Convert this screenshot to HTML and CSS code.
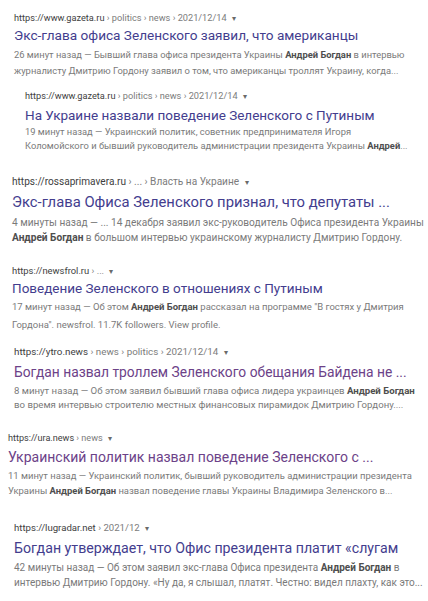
FILE: index.html
```html
<!DOCTYPE html>
<html lang="ru">
<head>
<meta charset="utf-8">
<title>Результаты поиска</title>
<link rel="stylesheet" href="styles.css">
</head>
<body>
<main class="results">
  <section class="res r1">
    <div class="url"><span class="dom">https://www.gazeta.ru</span> › politics › news › 2021/12/14 <span class="arr">▾</span></div>
    <div class="title">Экс-глава офиса Зеленского заявил, что американцы</div>
    <div class="snip">
      <div class="line">26 минут назад — Бывший глава офиса президента Украины <b>Андрей Богдан</b> в интервью</div>
      <div class="line">журналисту Дмитрию Гордону заявил о том, что американцы троллят Украину, когда...</div>
    </div>
  </section>
  <section class="res r2">
    <div class="url"><span class="dom">https://www.gazeta.ru</span> › politics › news › 2021/12/14 <span class="arr">▾</span></div>
    <div class="title">На Украине назвали поведение Зеленского с Путиным</div>
    <div class="snip">
      <div class="line">19 минут назад — Украинский политик, советник предпринимателя Игоря</div>
      <div class="line">Коломойского и бывший руководитель администрации президента Украины <b>Андрей</b>...</div>
    </div>
  </section>
  <section class="res r3">
    <div class="url"><span class="dom">https://rossaprimavera.ru</span> › ... › Власть на Украине <span class="arr">▾</span></div>
    <div class="title">Экс-глава Офиса Зеленского признал, что депутаты ...</div>
    <div class="snip">
      <div class="line">4 минуты назад — ... 14 декабря заявил экс-руководитель Офиса президента Украины</div>
      <div class="line"><b>Андрей Богдан</b> в большом интервью украинскому журналисту Дмитрию Гордону.</div>
    </div>
  </section>
  <section class="res r4">
    <div class="url"><span class="dom">https://newsfrol.ru</span> › ... <span class="arr">▾</span></div>
    <div class="title">Поведение Зеленского в отношениях с Путиным</div>
    <div class="snip">
      <div class="line">17 минут назад — Об этом <b>Андрей Богдан</b> рассказал на программе "В гостях у Дмитрия</div>
      <div class="line">Гордона". newsfrol. 11.7K followers. View profile.</div>
    </div>
  </section>
  <section class="res r5">
    <div class="url"><span class="dom">https://ytro.news</span> › news › politics › 2021/12/14 <span class="arr">▾</span></div>
    <div class="title visited">Богдан назвал троллем Зеленского обещания Байдена не ...</div>
    <div class="snip">
      <div class="line">8 минут назад — Об этом заявил бывший глава офиса лидера украинцев <b>Андрей Богдан</b></div>
      <div class="line">во время интервью строителю местных финансовых пирамидок Дмитрию Гордону....</div>
    </div>
  </section>
  <section class="res r6">
    <div class="url"><span class="dom">https://ura.news</span> › news <span class="arr">▾</span></div>
    <div class="title visited">Украинский политик назвал поведение Зеленского с ...</div>
    <div class="snip">
      <div class="line">11 минут назад — Украинский политик, бывший руководитель администрации президента</div>
      <div class="line">Украины <b>Андрей Богдан</b> назвал поведение главы Украины Владимира Зеленского в...</div>
    </div>
  </section>
  <section class="res r7">
    <div class="url"><span class="dom">https://lugradar.net</span> › 2021/12 <span class="arr">▾</span></div>
    <div class="title">Богдан утверждает, что Офис президента платит «слугам</div>
    <div class="snip">
      <div class="line">42 минуты назад — Об этом заявил экс-глава Офиса президента <b>Андрей Богдан</b> в</div>
      <div class="line">интервью Дмитрию Гордону. «Ну да, я слышал, платят. Честно: видел плахту, как это...</div>
    </div>
  </section>
</main>
</body>
</html>
```

FILE: styles.css
```css
html, body {
  margin: 0;
  padding: 0;
  background: #ffffff;
}
body {
  font-family: Roboto, "Liberation Sans", Arial, sans-serif;
  overflow: hidden;
}
.results {
  display: flex;
  flex-direction: column;
  padding-top: 10px;
}
.res {
  display: flex;
  flex-direction: column;
  padding-left: 14px;
}
.url {
  font-size: 9.2px;
  line-height: 16px;
  height: 16px;
  color: #7c7c7c;
  white-space: nowrap;
}
.url .dom {
  color: #3e3e3e;
}
.url .arr {
  display: inline-block;
  font-size: 8px;
  color: #6a6a6a;
  margin-left: 3px;
}
.title {
  font-size: 13.6px;
  line-height: 20px;
  height: 20px;
  color: #433d8e;
  white-space: nowrap;
}
.title.visited {
  color: #6c4288;
}
.snip {
  font-size: 9.4px;
  line-height: 16px;
  color: #7a7a7a;
}
.snip .line {
  white-space: nowrap;
}
.snip b {
  color: #4e4e4e;
  font-weight: 700;
}

/* result 1 */
.r1 .title { margin-top: -1px; }
.r1 .snip { margin-top: 2px; }

/* result 2 */
.r2 { padding-left: 25px; margin-top: 9px; }
.r2 .title { margin-top: 1px; font-size: 13.5px; }
.r2 .snip { line-height: 14px; font-size: 9.35px; }

/* result 3 */
.r3 { padding-left: 12px; margin-top: 21px; }
.r3 .url { font-size: 10.1px; }
.r3 .title { margin-top: 2px; font-size: 14.8px; }
.r3 .snip { line-height: 15px; margin-top: 2.5px; font-size: 10.15px; }

/* result 4 */
.r4 { padding-left: 12px; margin-top: 18.5px; }
.r4 .url { font-size: 9.4px; }
.r4 .title { margin-top: -1px; font-size: 13.5px; }
.r4 .snip { line-height: 18px; font-size: 9.5px; }

/* result 5 */
.r5 { padding-left: 14px; margin-top: 10px; }
.r5 .url { font-size: 9.8px; }
.r5 .title { margin-top: 2px; font-size: 13.8px; }
.r5 .snip { line-height: 14px; margin-top: 2px; font-size: 9.65px; }

/* result 6 */
.r6 { padding-left: 8px; margin-top: 18px; }
.r6 .url { font-size: 9.1px; }
.r6 .title { margin-top: 1px; font-size: 14px; }
.r6 .snip { line-height: 15px; margin-top: 0.5px; font-size: 9.45px; }

/* result 7 */
.r7 { padding-left: 14px; margin-top: 22.5px; }
.r7 .url { font-size: 9.6px; }
.r7 .title { margin-top: 2px; font-size: 14.2px; }
.r7 .snip { line-height: 15px; margin-top: 1.5px; font-size: 10px; }
```
